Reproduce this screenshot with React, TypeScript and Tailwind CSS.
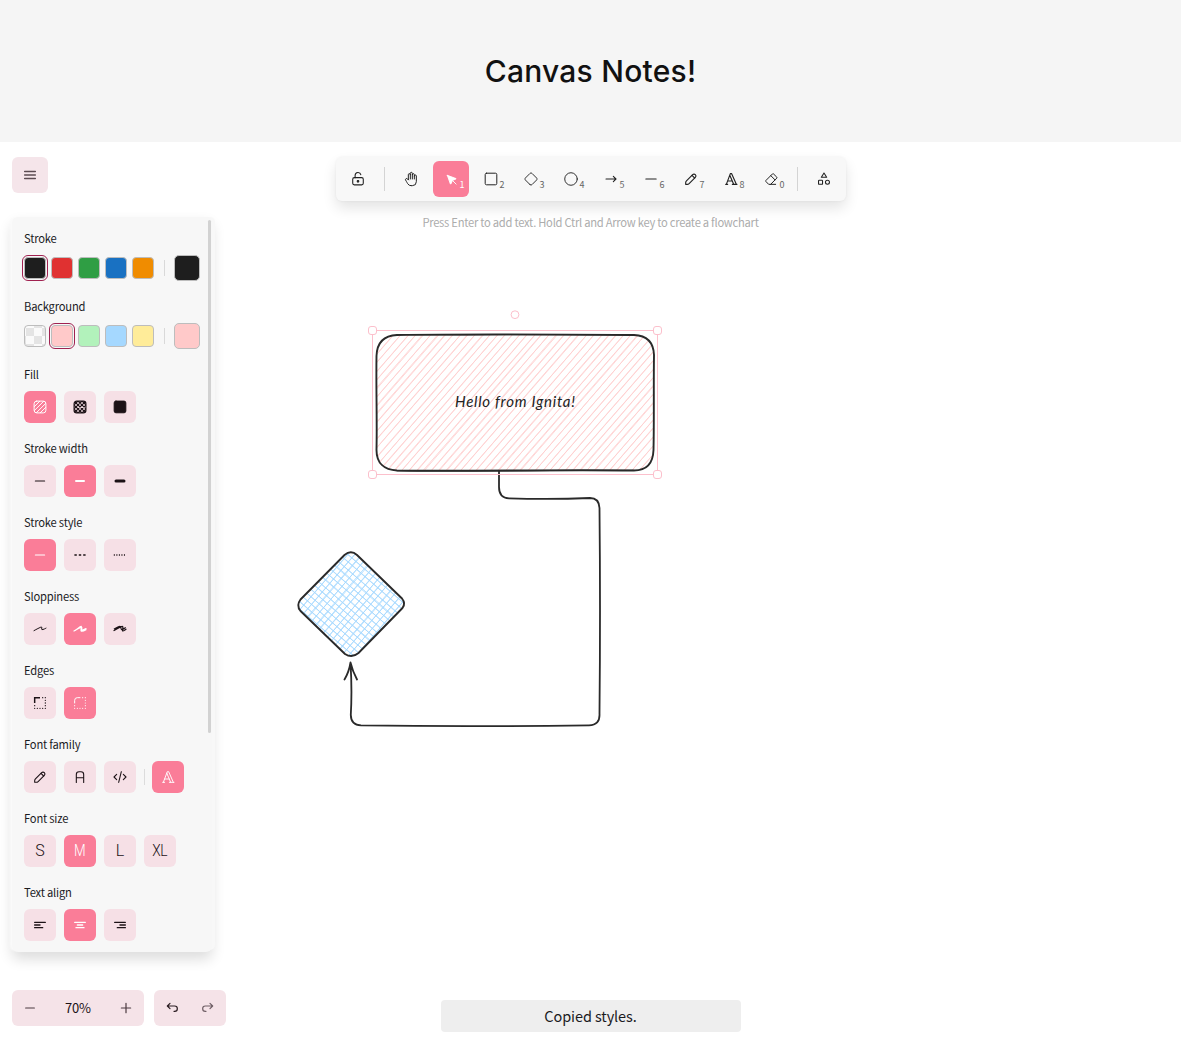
import React from "react";

type IconProps = { size?: number; box?: number; sw?: number; children: React.ReactNode };

function Icon({ size = 16, box = 24, sw = 1.5, children }: IconProps) {
  return (
    <svg width={size} height={size} viewBox={`0 0 ${box} ${box}`} fill="none" stroke="currentColor" strokeWidth={sw} strokeLinecap="round" strokeLinejoin="round" className="block shrink-0">
      {children}
    </svg>
  );
}

const pencil = (
  <>
    <path d="m7.643 15.69 7.774-7.773a2.357 2.357 0 1 0-3.334-3.334L4.31 12.357a3.333 3.333 0 0 0-.977 2.357v1.953h1.953c.884 0 1.732-.352 2.357-.977Z" />
    <path d="m11.25 5.417 3.333 3.333" />
  </>
);

const serifA = <path d="M4 20h3M14 20h7M6.9 15h6.9M10.2 6.3 16 20M5 20 11 4h2l7 16" />;

const tools = [
  { key: "1", active: true, icon: <Icon box={22} sw={1.25}><path fill="currentColor" d="M6 6l4.153 11.793a.365 .365 0 0 0 .331 .207a.366 .366 0 0 0 .332 -.207l2.184 -4.793l4.787 -1.994a.355 .355 0 0 0 .213 -.323a.355 .355 0 0 0 -.213 -.323l-11.787 -4.36z" /><path d="M13.5 13.5l4.5 4.5" /></Icon> },
  { key: "2", icon: <Icon><rect x="3.3" y="3.3" width="17.4" height="17.4" rx="2" /></Icon> },
  { key: "3", icon: <Icon sw={1.4}><path d="M10.5 20.4l-6.9 -6.9c-.781 -.781 -.781 -2.219 0 -3l6.9 -6.9c.781 -.781 2.219 -.781 3 0l6.9 6.9c.781 .781 .781 2.219 0 3l-6.9 6.9c-.781 .781 -2.219 .781 -3 0z" /></Icon> },
  { key: "4", icon: <Icon sw={1.4}><circle cx="12" cy="12" r="9.4" /></Icon> },
  { key: "5", icon: <Icon sw={1.6}><path d="M4.5 12h15M15.500 16l4-4M15.500 8l4 4" /></Icon> },
  { key: "6", icon: <Icon box={20} sw={1.4}><path d="M3.6 10h12.8" /></Icon> },
  { key: "7", icon: <Icon box={20} sw={1.4}>{pencil}</Icon> },
  { key: "8", icon: <Icon sw={1.7}>{serifA}</Icon> },
  { key: "0", icon: <Icon sw={1.5}><path d="M19 20h-10.5l-4.21 -4.3a1 1 0 0 1 0 -1.41l10 -10a1 1 0 0 1 1.41 0l5 5a1 1 0 0 1 0 1.41l-9.2 9.3M18 13.3l-6.3 -6.3" /></Icon> },
];

function Toolbar() {
  return (
    <div className="flex h-11 items-center rounded-md bg-[#f8f8f8] px-1 text-[#222] shadow-[0_0_3px_rgba(0,0,0,0.05),0_7px_14px_rgba(0,0,0,0.11)]">
      <div className="grid size-9 place-items-center">
        <Icon box={20} sw={1.35}>
          <rect x="3.4" y="8.3" width="13.2" height="9" rx="2" />
          <circle cx="10" cy="12.9" r="1" fill="currentColor" />
          <path d="M6.4 8.3V5.2a3.6 3.6 0 0 1 7.1 -.6" />
        </Icon>
      </div>
      <div className="mx-2 h-6 w-px bg-[#d4d4d4]" />
      <div className="mr-1 grid size-9 place-items-center">
        <Icon sw={1.5}>
          <path d="M8 13v-7.5a1.5 1.5 0 0 1 3 0v6.5M11 5.5v-2a1.5 1.5 0 1 1 3 0v8.5M14 5.5a1.5 1.5 0 0 1 3 0v6.5M17 7.5a1.5 1.5 0 0 1 3 0v8.5a6 6 0 0 1 -6 6h-2h.208a6 6 0 0 1 -5.012 -2.7c-.312 -.479 -1.407 -2.388 -3.286 -5.728a1.5 1.5 0 0 1 .536 -2.022a1.867 1.867 0 0 1 2.28 .28l1.47 1.47" />
        </Icon>
      </div>
      <div className="flex gap-1">
        {tools.map((t) => (
          <div key={t.key} className={t.active ? "relative grid size-9 place-items-center rounded-md bg-[#fa7d98] text-white" : "relative grid size-9 place-items-center"}>
            {t.icon}
            <span className={t.active ? "absolute right-1 bottom-[5px] text-[9px] leading-[14px] text-white" : "absolute right-1 bottom-[5px] text-[9px] leading-[14px] text-[#666]"}>{t.key}</span>
          </div>
        ))}
      </div>
      <div className="mx-2 h-6 w-px bg-[#d4d4d4]" />
      <div className="grid size-9 place-items-center">
        <Icon sw={1.6}>
          <path d="M12 3l-4 6.5h8z" />
          <circle cx="17.2" cy="17" r="3" />
          <rect x="3.8" y="14" width="6" height="6" rx="1" />
        </Icon>
      </div>
    </div>
  );
}

function Group({ label, children }: { label: string; children: React.ReactNode }) {
  return (
    <div className="flex flex-col gap-[9px]">
      <div className="h-[15px] text-[11.2px] leading-[15px] tracking-[-0.2px] text-[#1b1b1f]">{label}</div>
      {children}
    </div>
  );
}

function Choice({ active, children }: { active?: boolean; children: React.ReactNode }) {
  return (
    <div className={active ? "grid size-8 place-items-center rounded-md bg-[#fa7d98] text-white" : "grid size-8 place-items-center rounded-md bg-[#f6e0e6] text-[#1c1216]"}>
      {children}
    </div>
  );
}

const checker = "bg-[repeating-conic-gradient(#e4e4e4_0_25%,#fafafa_0_50%)] bg-[length:16px_16px] bg-[position:-7px_2px]";

function Swatches({ colors, selected, current }: { colors: string[]; selected: number; current: string }) {
  return (
    <div className="flex h-[26px] items-center gap-[5px]">
      {colors.map((c, i) => (
        <div key={c} className={i === selected ? "size-[22px] rounded-[4px] outline outline-[1.3px] outline-offset-[1px] outline-[#a02150]" : "size-[22px] rounded-[4px]"}>
          <div className={`size-full rounded-[4px] border border-[#bdbdbd] ${c}`} />
        </div>
      ))}
      <div className="ml-[5px] h-4 w-px bg-[#d9d9d9]" />
      <div className={`ml-1 size-[26px] rounded-[5px] border border-[#bdbdbd] ${current}`} />
    </div>
  );
}

const roundedBox = "M5.879 2.625h8.242a3.254 3.254 0 0 1 3.254 3.254v8.242a3.254 3.254 0 0 1-3.254 3.254H5.88a3.254 3.254 0 0 1-3.254-3.254V5.88a3.254 3.254 0 0 1 3.254-3.254Z";

function StylePanel() {
  return (
    <div className="relative flex h-[735px] w-[200px] flex-col gap-[18px] rounded-md bg-[#f7f7f7] px-3 pt-3.5 shadow-[4px_-1px_0_-1px_#f8f8f8,-3px_0_2px_-1px_#fafafa,0_7px_14px_rgba(0,0,0,0.14)]">
      <div className="absolute top-[3px] right-px h-[513px] w-[3px] rounded-sm bg-[#d2d2d2]" />
      <Group label="Stroke">
        <Swatches colors={["bg-[#1e1e1e]", "bg-[#e03131]", "bg-[#2f9e44]", "bg-[#1971c2]", "bg-[#f08c00]"]} selected={0} current="bg-[#1e1e1e]" />
      </Group>
      <Group label="Background">
        <Swatches colors={[checker, "bg-[#ffc9c9]", "bg-[#b2f2bb]", "bg-[#a5d8ff]", "bg-[#ffec99]"]} selected={1} current="bg-[#ffc9c9]" />
      </Group>
      <Group label="Fill">
        <div className="flex gap-2">
          <Choice active>
            <Icon box={20} sw={1.25}>
              <clipPath id="fill-box"><path d={roundedBox} /></clipPath>
              <path d={roundedBox} />
              <path clipPath="url(#fill-box)" d="M2.258 15.156 15.156 2.258M7.324 20.222 20.222 7.325m-20.444 5.35L12.675-.222m-8.157 18.34L17.416 5.22" />
            </Icon>
          </Choice>
          <Choice>
            <Icon box={20} sw={1.5}>
              <path d={roundedBox} />
              <path clipPath="url(#fill-box)" d="M-2 12 12-2M0 15 15 0M2 18 18 2M5 20 20 5M8 22 22 8M12 22 22 12M8-2 22 12M5 0 20 15M2 2 18 18M0 5 15 20M-2 8 12 22M-2 12 8 22M12-2 22 8" />
            </Icon>
          </Choice>
          <Choice><Icon box={20} sw={1.25}><path d="M4.900 2.625h10.200a2.200 2.200 0 0 1 2.200 2.200v10.200a2.200 2.200 0 0 1-2.200 2.200H4.900a2.200 2.200 0 0 1-2.200-2.200V4.800a2.200 2.200 0 0 1 2.200-2.200Z" fill="currentColor" /></Icon></Choice>
        </div>
      </Group>
      <Group label="Stroke width">
        <div className="flex gap-2">
          <Choice><Icon box={20} sw={1.3}><path d="M4.2 10h11.6" /></Icon></Choice>
          <Choice active><Icon box={20} sw={2.5}><path d="M5 10h10" /></Icon></Choice>
          <Choice><Icon box={20} sw={3.75}><path d="M5 10h10" /></Icon></Choice>
        </div>
      </Group>
      <Group label="Stroke style">
        <div className="flex gap-2">
          <Choice active><Icon box={20} sw={1.3}><path d="M4.2 10h11.6" /></Icon></Choice>
          <Choice><Icon sw={2.4}><path strokeLinecap="butt" d="M3.600 12h3.600M10.200 12h3.600M16.800 12h3.600" /></Icon></Choice>
          <Choice><Icon sw={2}><path strokeLinecap="butt" d="M2.700 12h1.600M6.500 12h1.600M10.300 12h1.600M14.100 12h1.600M17.900 12h1.600" /></Icon></Choice>
        </div>
      </Group>
      <Group label="Sloppiness">
        <div className="flex gap-2">
          <Choice><Icon box={20} sw={1.25}><path d="M2.5 12.038c1.655-.885 5.9-3.292 8.568-4.354 2.668-1.063.101 2.821 1.32 3.104 1.218.283 5.112-1.814 5.112-1.814" /></Icon></Choice>
          <Choice active><Icon box={20} sw={1.5}><path d="M2.5 12.563c1.655-.886 5.9-3.293 8.568-4.355 2.668-1.062.101 2.822 1.32 3.105 1.218.283 5.112-1.814 5.112-1.814m-13.469 2.23c2.963-1.586 6.13-5.62 7.468-4.998 1.338.623-1.153 4.11-.132 5.595 1.02 1.487 6.133-1.43 6.133-1.43" /></Icon></Choice>
          <Choice><Icon box={20} sw={1.5}><path d="M2.5 11.936c1.737-.879 8.627-5.346 10.42-5.268 1.795.078-.418 5.138.345 5.736.763.598 3.53-1.789 4.235-2.147M2.929 9.788c1.164-.519 5.47-3.28 6.987-3.114 1.519.165 1 3.827 2.121 4.109 1.122.281 3.839-2.016 4.606-2.42" /></Icon></Choice>
        </div>
      </Group>
      <Group label="Edges">
        <div className="flex gap-2">
          <Choice>
            <Icon>
              <path d="M4 12V4h8" strokeWidth="2.2" strokeLinecap="butt" strokeLinejoin="miter" />
              <path d="M16 4v.01M20 4v.01M20 8v.01M20 12v.01M20 16v.01M20 20v.01M16 20v.01M12 20v.01M8 20v.01M4 20v.01M4 16v.01" strokeWidth="2" />
            </Icon>
          </Choice>
          <Choice active>
            <Icon sw={1.5}>
              <path d="M4 12v-4a4 4 0 0 1 4 -4h4" />
              <path d="M16 4v.01M20 4v.01M20 8v.01M20 12v.01M20 16v.01M20 20v.01M16 20v.01M12 20v.01M8 20v.01M4 20v.01M4 16v.01" strokeWidth="1.7" />
            </Icon>
          </Choice>
        </div>
      </Group>
      <Group label="Font family">
        <div className="flex gap-2">
          <Choice><Icon box={20} sw={1.35}>{pencil}</Icon></Choice>
          <Choice><Icon box={20} sw={1.35}><path d="M5.4 16.9V6.8a3.4 3.4 0 0 1 3.4-3.4h2.4a3.4 3.4 0 0 1 3.4 3.4v10.1M5.4 11h9.2" /></Icon></Choice>
          <Choice><Icon sw={1.6}><path d="M7 8l-4 4l4 4M17 8l4 4l-4 4M14 4l-4 16" /></Icon></Choice>
          <div className="h-4 w-px self-center bg-[#dcdcdc]" />
          <div className="-ml-px"><Choice active><Icon sw={1.4}>{serifA}</Icon></Choice></div>
        </div>
      </Group>
      <Group label="Font size">
        <div className="flex gap-2 font-['Roboto',sans-serif] text-[16px] leading-5 font-light">
          <Choice>S</Choice>
          <Choice active><span className="inline-block scale-x-[0.84]">M</span></Choice>
          <Choice>L</Choice>
          <Choice><span className="inline-block scale-x-[0.86] tracking-[-0.5px]">XL</span></Choice>
        </div>
      </Group>
      <Group label="Text align">
        <div className="flex gap-2">
          <Choice><Icon sw={2.1}><path d="M4 8h16M4 12h8M4 16h12" /></Icon></Choice>
          <Choice active><Icon sw={2}><path d="M4 8h16M8 12h8M6 16h12" /></Icon></Choice>
          <Choice><Icon sw={2.1}><path d="M4 8h16M12 12h8M8 16h12" /></Icon></Choice>
        </div>
      </Group>
    </div>
  );
}

// Parallel sketch lines across a box; each is drawn as two slightly diverging strokes.
function hatch(cx: number, cy: number, radius: number, angle: number, gap: number) {
  const a = (angle * Math.PI) / 180;
  const dx = Math.cos(a);
  const dy = Math.sin(a);
  const parts: string[] = [];
  let seed = 7;
  const jitter = () => {
    seed = (seed * 16807) % 2147483647;
    return (seed / 2147483647 - 0.5) * 1.2;
  };
  for (let o = -radius; o <= radius; o += gap) {
    const x = cx - dy * o;
    const y = cy + dx * o;
    for (let k = 0; k < 2; k++) {
      parts.push(`M${(x - dx * radius + jitter()).toFixed(1)} ${(y - dy * radius + jitter()).toFixed(1)}L${(x + dx * radius + jitter()).toFixed(1)} ${(y + dy * radius + jitter()).toFixed(1)}`);
    }
  }
  return parts.join("");
}

const cardShape = "M397 335C470 333.8 570 334.5 634 335C647 335.500 653.500 342 654 355C653.500 390 654.200 420 653.500 450C653 464 646 470.500 634 470.500C550 469.500 470 471.500 397 470.500C384 470 376.500 463 376.500 450C377.200 420 376 390 376.500 356C377 342 384 335.500 397 335Z";
const diamondShape = "M357 555L402 598.500Q406 603.500 402.500 608L358.500 653Q352 658.500 345 654L300.500 611Q296 605.500 300.500 599.500L344.500 555Q351 549.500 357 555Z";

function Canvas() {
  return (
    <svg width="1181" height="897" viewBox="0 142 1181 897" fill="none" className="absolute inset-0 z-0 block">
      <clipPath id="card"><path d={cardShape} /></clipPath>
      <clipPath id="diamond"><path d={diamondShape} /></clipPath>
      <path clipPath="url(#card)" d={hatch(515, 403, 170, -49, 5.6)} stroke="#ffcfcf" strokeWidth="0.85" />
      <g clipPath="url(#diamond)" stroke="#a5d8ff" strokeWidth="0.8">
        <path d={hatch(351, 604, 80, -49, 5.6)} />
        <path d={hatch(351, 604, 80, 41, 5.6)} />
      </g>
      <g stroke="#2a2a2a" strokeLinecap="round" strokeLinejoin="round">
        <path d={cardShape} strokeWidth="1.9" />
        <path d="M397 334.500C480 335.600 560 333.800 634 335.200M397 470.600C480 472 560 469.600 634 470.400" strokeWidth="1.2" />
        <path d={diamondShape} strokeWidth="1.9" />
        <path d="M499 471V487Q499 498 509 498.300Q550 499.600 590 498Q599 498 599.500 508Q600.500 610 599.500 714Q600 725 589 725.300Q470 727 361 725.400Q351 725 350.800 715Q352.200 690 350.500 663M344.500 679.500Q349 672 350.500 662.500Q352.500 671 357 679.500" strokeWidth="1.8" />
      </g>
      <g stroke="#fcc0cc" strokeWidth="1">
        <rect x="372.500" y="330.500" width="285" height="144" />
        <g fill="#fff">
          <rect x="368.500" y="326.500" width="8" height="8" rx="2.500" />
          <rect x="653.500" y="326.500" width="8" height="8" rx="2.500" />
          <rect x="368.500" y="470.500" width="8" height="8" rx="2.500" />
          <rect x="653.500" y="470.500" width="8" height="8" rx="2.500" />
          <circle cx="515" cy="314.700" r="3.900" />
        </g>
      </g>
      <text x="455" y="406.500" textLength="120" lengthAdjust="spacing" className="fill-[#222] font-['Lato',sans-serif] text-[15px] italic">Hello from Ignita!</text>
    </svg>
  );
}

export default function App() {
  return (
    <div className="h-[1039px] w-[1181px] overflow-hidden bg-white font-['Noto_Sans_CJK_SC',sans-serif]">
      <header className="flex h-[142px] items-center justify-center bg-[#f5f5f5]">
        <h1 className="font-['Inter',sans-serif] text-[30px] leading-9 font-medium tracking-[0.25px] text-[#111]">Canvas Notes!</h1>
      </header>
      <main className="relative h-[897px]">
        <Canvas />
        <div className="relative z-10 grid h-full grid-cols-[227px_1fr_227px]">
          <aside className="flex flex-col pt-[15px] pl-3">
            <div className="mb-6 grid size-9 place-items-center rounded-md bg-[#f5e5ea] text-[#5b4b51]">
              <Icon box={20} sw={1.7}><path d="M3.300 5.600h13.400M3.300 10h13.400M3.300 14.400h13.400" /></Icon>
            </div>
            <StylePanel />
            <div className="mt-[38px] flex gap-2.5">
              <div className="flex h-9 w-[132px] items-center justify-between rounded-md bg-[#f5e3e8] px-[10px] text-[#4b3a40]">
                <Icon box={20} sw={1.4}><path d="M4.500 10h11" /></Icon>
                <span className="text-[13px] leading-5 tracking-[-0.2px] text-[#1c1216]">70%</span>
                <Icon box={20} sw={1.5}><path d="M4.200 10h11.600M10 4.200v11.600" /></Icon>
              </div>
              <div className="flex h-9 w-[72px] items-center justify-between rounded-md bg-[#f5e3e8] px-2.5 text-[#2b1d22]">
                <Icon box={20} sw={1.500}><path d="M7.500 10.833 4.167 7.500 7.500 4.167M4.167 7.500h9.166a3.333 3.333 0 0 1 0 6.667H12.500" /></Icon>
                <div className="text-[#6f5f65]"><Icon box={20} sw={1.500}><path d="M12.500 10.833 15.833 7.500 12.500 4.167M15.833 7.500H6.667a3.333 3.333 0 1 0 0 6.667H7.500" /></Icon></div>
              </div>
            </div>
          </aside>
          <section className="flex flex-col items-center pt-[15px] pb-[7px]">
            <Toolbar />
            <p className="mt-[13px] text-[11.200px] leading-4 tracking-[-0.26px] whitespace-nowrap text-[#acacac]">Press Enter to add text. Hold Ctrl and Arrow key to create a flowchart</p>
            <div className="mt-auto grid h-8 w-[300px] place-items-center rounded-[4px] bg-[#eeeeee] text-[14.500px] leading-5 tracking-[-0.1px] text-[#1b1b1f]">Copied styles.</div>
          </section>
        </div>
      </main>
    </div>
  );
}
